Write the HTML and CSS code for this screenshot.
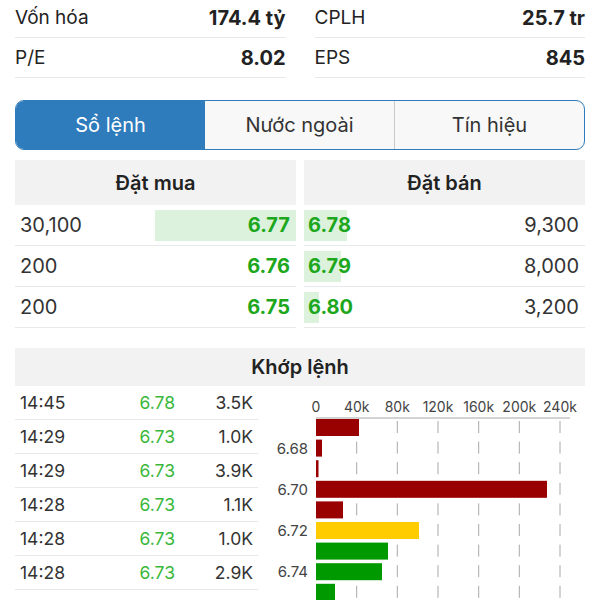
FILE: index.html
```html
<!DOCTYPE html>
<html>
<head>
  <meta charset="UTF-8">
  <title>Chi tiết mã</title>
  <link rel="stylesheet" href="styles.css">
</head>
<body>
  <div class="page">
    <div class="stats">
      <div class="stats-col">
        <div class="stat-row"><span>Vốn hóa</span><b>174.4 tỷ</b></div>
        <div class="stat-row"><span>P/E</span><b>8.02</b></div>
      </div>
      <div class="stats-col">
        <div class="stat-row"><span>CPLH</span><b>25.7 tr</b></div>
        <div class="stat-row"><span>EPS</span><b>845</b></div>
      </div>
    </div>

    <div class="segmented">
      <div class="segment active">Sổ lệnh</div>
      <div class="segment">Nước ngoài</div>
      <div class="segment">Tín hiệu</div>
    </div>

    <div class="orderbook">
      <div class="book-side buy">
        <div class="section-title">Đặt mua</div>
        <div class="book-row"><span class="depth" style="width:141px"></span><span class="qty">30,100</span><span class="price">6.77</span></div>
        <div class="book-row"><span class="qty">200</span><span class="price">6.76</span></div>
        <div class="book-row"><span class="qty">200</span><span class="price">6.75</span></div>
      </div>
      <div class="book-side sell">
        <div class="section-title">Đặt bán</div>
        <div class="book-row"><span class="depth" style="width:43px"></span><span class="price">6.78</span><span class="qty">9,300</span></div>
        <div class="book-row"><span class="depth" style="width:37px"></span><span class="price">6.79</span><span class="qty">8,000</span></div>
        <div class="book-row"><span class="depth" style="width:15px"></span><span class="price">6.80</span><span class="qty">3,200</span></div>
      </div>
    </div>

    <div class="matched">
      <div class="section-title">Khớp lệnh</div>
      <div class="matched-body">
        <div class="ticks">
          <div class="tick"><span>14:45</span><span class="tick-price">6.78</span><span class="tick-vol">3.5K</span></div>
          <div class="tick"><span>14:29</span><span class="tick-price">6.73</span><span class="tick-vol">1.0K</span></div>
          <div class="tick"><span>14:29</span><span class="tick-price">6.73</span><span class="tick-vol">3.9K</span></div>
          <div class="tick"><span>14:28</span><span class="tick-price">6.73</span><span class="tick-vol">1.1K</span></div>
          <div class="tick"><span>14:28</span><span class="tick-price">6.73</span><span class="tick-vol">1.0K</span></div>
          <div class="tick"><span>14:28</span><span class="tick-price">6.73</span><span class="tick-vol">2.9K</span></div>
        </div>
        <svg class="volume-chart" width="327" height="214" viewBox="0 0 327 214">
          <g class="axis-labels">
            <text x="58" y="26">0</text>
            <text x="98.7" y="26">40k</text>
            <text x="139.3" y="26">80k</text>
            <text x="180" y="26">120k</text>
            <text x="220.7" y="26">160k</text>
            <text x="261.3" y="26">200k</text>
            <text x="302" y="26">240k</text>
          </g>
          <line class="axis" x1="58" y1="32" x2="312" y2="32"/>
          <g class="grid">
            <line x1="98.7" y1="35" x2="98.7" y2="214"/>
            <line x1="139.3" y1="35" x2="139.3" y2="214"/>
            <line x1="180" y1="35" x2="180" y2="214"/>
            <line x1="220.7" y1="35" x2="220.7" y2="214"/>
            <line x1="261.3" y1="35" x2="261.3" y2="214"/>
            <line x1="302" y1="35" x2="302" y2="214"/>
          </g>
          <g class="bars">
            <rect class="down" x="58" y="33" width="43" height="17"/>
            <rect class="down" x="58" y="53.6" width="6" height="17"/>
            <rect class="down" x="58" y="74.2" width="2.5" height="17"/>
            <rect class="down" x="58" y="94.8" width="231" height="17"/>
            <rect class="down" x="58" y="115.4" width="27" height="17"/>
            <rect class="ref" x="58" y="136" width="103" height="17"/>
            <rect class="up" x="58" y="156.6" width="72" height="17"/>
            <rect class="up" x="58" y="177.2" width="66" height="17"/>
            <rect class="up" x="58" y="197.8" width="19" height="17"/>
          </g>
          <g class="price-labels">
            <text x="50" y="67.5">6.68</text>
            <text x="50" y="108.7">6.70</text>
            <text x="50" y="149.9">6.72</text>
            <text x="50" y="191.1">6.74</text>
          </g>
        </svg>
      </div>
    </div>
  </div>
</body>
</html>
```

FILE: styles.css
```css
:root {
  --text-primary: #222222;
  --text-secondary: #444444;
  --border-color: #e8e8e8;
  --header-bg: #f2f2f2;
  --brand-blue: #2f7cbc;
  --price-up: #1ca71c;
  --price-up-light: #3bb83b;
  --depth-bg: #dcf2dc;
}

* {
  box-sizing: border-box;
  margin: 0;
  padding: 0;
}

html, body {
  height: 100vh;
  overflow: hidden;
}

body {
  font-family: 'Inter', 'Noto Sans', sans-serif;
  background: #ffffff;
  color: var(--text-primary);
}

.page {
  padding: 0 15px;
}

/* stats */

.stats {
  display: grid;
  grid-template-columns: 1fr 1fr;
  gap: 29px;
  margin-top: -2px;
}

.stat-row {
  display: flex;
  align-items: center;
  justify-content: space-between;
  height: 40px;
  border-bottom: 1px solid var(--border-color);
  font-size: 19px;
}

.stat-row b {
  font-weight: 700;
  font-size: 20px;
}

/* segmented control */

.segmented {
  display: flex;
  height: 50px;
  margin-top: 22px;
  border: 1.5px solid var(--brand-blue);
  border-radius: 9px;
  overflow: hidden;
  background: #f8f8f8;
}

.segment {
  flex: 1;
  display: flex;
  align-items: center;
  justify-content: center;
  font-size: 20px;
  color: #333333;
}

.segment + .segment {
  border-left: 1px solid #c9c9c9;
}

.segment.active {
  background: var(--brand-blue);
  color: #ffffff;
}

.segment.active + .segment {
  border-left: none;
}

/* order book */

.orderbook {
  display: grid;
  grid-template-columns: 1fr 1fr;
  gap: 8px;
  margin-top: 10px;
}

.section-title {
  display: flex;
  align-items: center;
  justify-content: center;
  height: 45px;
  background: var(--header-bg);
  font-size: 20px;
  font-weight: 600;
}

.book-row {
  position: relative;
  display: flex;
  align-items: center;
  justify-content: space-between;
  height: 41px;
  padding: 0 6px 0 5px;
  border-bottom: 1px solid var(--border-color);
  font-size: 20px;
}

.book-row .depth {
  position: absolute;
  top: 5px;
  bottom: 4px;
  background: var(--depth-bg);
}

.buy .depth {
  right: 0;
}

.sell .depth {
  left: 0;
}

.book-row .qty,
.book-row .price {
  position: relative;
}

.book-row .qty {
  color: #333333;
}

.book-row .price {
  color: var(--price-up);
  font-weight: 700;
}

.sell .book-row {
  padding: 0 6px 0 4px;
}

/* matched orders */

.matched {
  margin-top: 20px;
}

.matched .section-title {
  height: 38px;
}

.matched-body {
  display: flex;
}

.ticks {
  width: 243px;
  flex-shrink: 0;
}

.tick {
  display: grid;
  grid-template-columns: 1fr 60px 78px;
  align-items: center;
  height: 34px;
  padding: 0 5px;
  border-bottom: 1px solid var(--border-color);
  font-size: 17.5px;
  color: #333333;
}

.tick-price,
.tick-vol {
  text-align: right;
}

.tick-price {
  color: var(--price-up-light);
}

.volume-chart {
  display: block;
  flex-shrink: 0;
}

.axis-labels text {
  font-size: 14px;
  fill: var(--text-secondary);
  text-anchor: middle;
}

.price-labels text {
  font-size: 15px;
  fill: var(--text-secondary);
  text-anchor: end;
}

.axis {
  stroke: #c4c4c4;
  stroke-width: 1.5;
}

.grid line {
  stroke: #a8a8a8;
  stroke-width: 1;
  stroke-dasharray: 12 8.6;
}

.bars .down {
  fill: #990000;
}

.bars .ref {
  fill: #ffcc00;
}

.bars .up {
  fill: #009900;
}
```
